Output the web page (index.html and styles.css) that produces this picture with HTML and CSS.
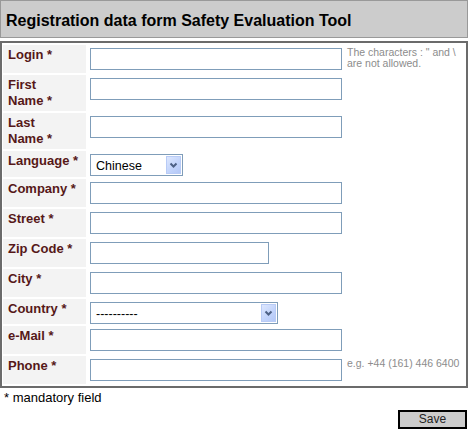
FILE: index.html
```html
<!DOCTYPE html>
<html>
<head>
<meta charset="utf-8">
<title>Registration data form</title>
<link rel="stylesheet" href="styles.css">
</head>
<body>
<div class="page">
  <div class="title">Registration data form Safety Evaluation Tool</div>
  <table class="form">
    <tr>
      <th class="label">Login&nbsp;*</th>
      <td class="field"><input class="text" type="text"></td>
      <td class="hint">The characters : " and \ are not allowed.</td>
    </tr>
    <tr>
      <th class="label">First Name&nbsp;*</th>
      <td class="field"><input class="text" type="text"></td>
      <td class="hint"></td>
    </tr>
    <tr>
      <th class="label">Last Name&nbsp;*</th>
      <td class="field"><input class="text" type="text"></td>
      <td class="hint"></td>
    </tr>
    <tr>
      <th class="label">Language&nbsp;*</th>
      <td class="field sel-cell">
        <div class="select select-lang">
          <span class="select-value">Chinese</span>
          <span class="select-btn"><svg width="15" height="18" viewBox="0 0 15 18"><path d="M4.5 7.5 L7.5 10.5 L10.5 7.5" fill="none" stroke="#4d6185" stroke-width="2"/></svg></span>
        </div>
      </td>
      <td class="hint"></td>
    </tr>
    <tr>
      <th class="label">Company&nbsp;*</th>
      <td class="field"><input class="text" type="text"></td>
      <td class="hint"></td>
    </tr>
    <tr>
      <th class="label">Street&nbsp;*</th>
      <td class="field"><input class="text" type="text"></td>
      <td class="hint"></td>
    </tr>
    <tr>
      <th class="label">Zip Code&nbsp;*</th>
      <td class="field"><input class="text text-zip" type="text"></td>
      <td class="hint"></td>
    </tr>
    <tr>
      <th class="label">City&nbsp;*</th>
      <td class="field"><input class="text" type="text"></td>
      <td class="hint"></td>
    </tr>
    <tr>
      <th class="label">Country&nbsp;*</th>
      <td class="field sel-cell sel-cell-tight">
        <div class="select select-country">
          <span class="select-value">----------</span>
          <span class="select-btn"><svg width="15" height="18" viewBox="0 0 15 18"><path d="M4.5 7.5 L7.5 10.5 L10.5 7.5" fill="none" stroke="#4d6185" stroke-width="2"/></svg></span>
        </div>
      </td>
      <td class="hint"></td>
    </tr>
    <tr>
      <th class="label">e-Mail&nbsp;*</th>
      <td class="field"><input class="text" type="text"></td>
      <td class="hint"></td>
    </tr>
    <tr>
      <th class="label">Phone&nbsp;*</th>
      <td class="field"><input class="text" type="text"></td>
      <td class="hint">e.g. +44 (161) 446 6400</td>
    </tr>
  </table>
  <div class="mandatory">* mandatory field</div>
  <div class="actions"><button class="save" type="button">Save</button></div>
</div>
</body>
</html>
```
FILE: styles.css
```css
html, body {
  margin: 0;
  padding: 0;
  background: #ffffff;
}

body {
  font-family: "Liberation Sans", Arial, sans-serif;
  color: #000;
}

.page {
  width: 468px;
}

.title {
  background: #cccccc;
  border: 1px solid #999999;
  padding: 11px 5px 7px;
  font-size: 16px;
  line-height: 18px;
  font-weight: bold;
  color: #000;
}

.form {
  margin-top: 3px;
  width: 468px;
  table-layout: fixed;
  border: 2px solid #6b6b6b;
  border-collapse: separate;
  border-spacing: 1px 2px;
}

.label {
  box-sizing: border-box;
  width: 83px;
  background: #f3f3f3;
  text-align: left;
  vertical-align: top;
  padding: 2px 6px 2px 5px;
  font-size: 13px;
  line-height: 16px;
  font-weight: bold;
  color: #561818;
}

.field {
  box-sizing: border-box;
  width: 257px;
  vertical-align: top;
  padding: 3px 2px 3px 3px;
}

.sel-cell {
  padding-bottom: 1px;
}

.sel-cell-tight {
  padding-bottom: 0;
}

.hint {
  vertical-align: top;
  padding: 2px 2px 0 2px;
  font-size: 10.5px;
  line-height: 11px;
  color: #8c8c8c;
}

.text {
  display: block;
  box-sizing: border-box;
  width: 252px;
  height: 22px;
  margin: 0;
  padding: 0 3px;
  border: 1px solid #7f9db9;
  background: #fff;
  font-family: "Liberation Sans", Arial, sans-serif;
  font-size: 12px;
  outline: none;
}

.text-zip {
  width: 179px;
}

.select {
  box-sizing: border-box;
  display: flex;
  align-items: center;
  justify-content: space-between;
  height: 22px;
  border: 1px solid #7f9db9;
  background: #fff;
  font-size: 12.5px;
  color: #000;
}

.select-lang {
  width: 93px;
}

.select-country {
  width: 188px;
}

.select-value {
  padding-left: 5px;
  padding-top: 1px;
  white-space: nowrap;
}

.select-btn {
  box-sizing: border-box;
  display: flex;
  width: 15px;
  height: 18px;
  margin-right: 1px;
  border: 1px solid #b8cbf6;
  background: linear-gradient(135deg, #dde7fe 0%, #c1d3fb 60%, #b4c8f7 100%);
}

.select-btn svg {
  display: block;
  margin: -1px;
}

.mandatory {
  margin-top: 2px;
  padding-left: 4px;
  font-size: 13px;
  line-height: 15px;
}

.actions {
  display: flex;
  justify-content: flex-end;
  margin-top: 5px;
  padding-right: 1px;
}

.save {
  box-sizing: border-box;
  width: 69px;
  height: 19px;
  margin: 0;
  padding: 0;
  border: 2px solid #000;
  background: #cccccc;
  font-family: "Liberation Sans", Arial, sans-serif;
  font-size: 12px;
  line-height: 15px;
  color: #222;
}
```
